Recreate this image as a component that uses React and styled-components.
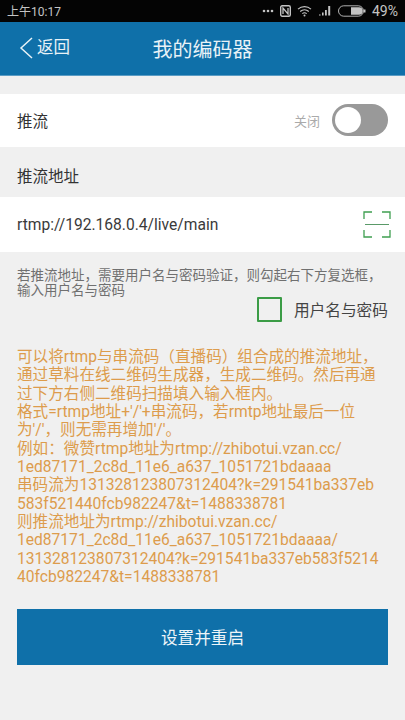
import React from 'react';
import styled, { createGlobalStyle } from 'styled-components';

const Global = createGlobalStyle`
  html, body {
    margin: 0;
    padding: 0;
    background: #f0f0f0;
  }
  * {
    box-sizing: border-box;
  }
`

const Page = styled.div`
  width: 405px;
  height: 720px;
  overflow: hidden;
  display: flex;
  flex-direction: column;
  background: #f0f0f0;
  font-family: Roboto, "Noto Sans CJK SC", sans-serif;
  color: #333;
`

const StatusBar = styled.div`
  height: 22px;
  flex: none;
  padding: 0 7px 1px 7px;
  display: flex;
  align-items: center;
  justify-content: space-between;
  background: #040404;
  color: #c4c4c4;
  font-size: 12px;
`

const StatusIcons = styled.div`
  display: flex;
  align-items: center;
  gap: 6px;
  font-size: 14px;
  svg {
    display: block;
  }
`

const Header = styled.header`
  height: 54px;
  flex: none;
  position: relative;
  display: flex;
  align-items: center;
  justify-content: center;
  background: #0f70a9;
  color: #e8f2f7;
  border-bottom: 1px solid #5a9cc4;
`

const Back = styled.div`
  position: absolute;
  left: 19px;
  top: 12px;
  display: flex;
  align-items: center;
  gap: 4px;
  font-size: 16.5px;
  line-height: 28px;
`

const Title = styled.h1`
  margin: 0 0 1px;
  font-size: 20px;
  font-weight: 400;
`

const Row = styled.div`
  height: ${p => p.$h}px;
  flex: none;
  padding: ${p => p.$pushDown || 0}px 17px ${p => p.$pushUp || 0}px;
  display: flex;
  align-items: center;
  justify-content: space-between;
  background: ${p => (p.$plain ? 'transparent' : '#fff')};
  margin-top: ${p => p.$top || 0}px;
`

const Label = styled.span`
  font-size: 15.5px;
  color: #333;
`

const Address = styled.span`
  font-size: 15.6px;
  color: #3a3a3a;
`

const SwitchGroup = styled.div`
  display: flex;
  align-items: center;
  gap: 12px;
`

const SwitchState = styled.span`
  font-size: 13px;
  color: #aaa;
`

const Track = styled.div`
  width: 56px;
  height: 32px;
  padding: 3px;
  border-radius: 16px;
  background: #999;
`

const Knob = styled.div`
  width: 26px;
  height: 26px;
  border-radius: 50%;
  background: #fff;
`

const ScanIcon = styled.svg`
  display: block;
  margin-right: -3px;
`

const Hint = styled.p`
  margin: 16px 17px 0;
  font-size: 13.5px;
  line-height: 15px;
  color: #707070;
  white-space: pre-line;
`

const CheckRow = styled.div`
  margin: -2px 17px 0 0;
  display: flex;
  align-items: center;
  justify-content: flex-end;
  gap: 12px;
  height: 26px;
`

const CheckBox = styled.div`
  width: 25px;
  height: 25px;
  border: 2px solid #3b9c46;
  border-radius: 1px;
`

const CheckLabel = styled.span`
  font-size: 15.7px;
  color: #444;
`

const Notes = styled.p`
  margin: 26px 17px 0;
  font-size: 15.6px;
  line-height: 18.35px;
  color: #dd9c4c;
  white-space: pre;
`

const SubmitButton = styled.div`
  height: 56px;
  margin: 23px 17px 0;
  flex: none;
  display: flex;
  align-items: center;
  justify-content: center;
  background: #0f70a9;
  color: #eef5f9;
  font-size: 16.6px;
`

const notes = `可以将rtmp与串流码（直播码）组合成的推流地址，
通过草料在线二维码生成器，生成二维码。然后再通
过下方右侧二维码扫描填入输入框内。
格式=rtmp地址+'/'+串流码，若rmtp地址最后一位
为'/'，则无需再增加'/'。
例如：微赞rtmp地址为rtmp://zhibotui.vzan.cc/
1ed87171_2c8d_11e6_a637_1051721bdaaaa
串码流为131328123807312404?k=291541ba337eb
583f521440fcb982247&t=1488338781
则推流地址为rtmp://zhibotui.vzan.cc/
1ed87171_2c8d_11e6_a637_1051721bdaaaa/
131328123807312404?k=291541ba337eb583f5214
40fcb982247&t=1488338781`

const StatusGlyphs = () => (
  <StatusIcons>
    <svg width="12" height="4" viewBox="0 0 12 4">
      <circle cx="2" cy="2" r="1.3" fill="#c4c4c4" />
      <circle cx="6" cy="2" r="1.3" fill="#c4c4c4" />
      <circle cx="10" cy="2" r="1.3" fill="#c4c4c4" />
    </svg>
    <svg width="11" height="12" viewBox="0 0 11 12">
      <rect x="0.7" y="0.7" width="9.6" height="10.6" rx="1.5" fill="none" stroke="#c4c4c4" strokeWidth="1.4" />
      <path d="M3 9V3l5 6V3" fill="none" stroke="#c4c4c4" strokeWidth="1.3" />
    </svg>
    <svg width="15" height="12" viewBox="0 0 15 12">
      <path d="M1 4.2c3.7-3.4 9.3-3.4 13 0M3.2 6.5c2.500-2.200 6.100-2.200 8.600 0M5.300 8.600c1.300-1 3.100-1 4.400 0" fill="none" stroke="#c4c4c4" strokeWidth="1.1" />
      <circle cx="7.5" cy="10.6" r="1" fill="#c4c4c4" />
    </svg>
    <svg width="14" height="11" viewBox="0 0 14 11">
      <path d="M1 9.500h1.600v1H1zM4 7.500h1.600v3H4zM7 5h1.800v5.500H7zM10.200 1h2v9.500h-2z" fill="#c4c4c4" />
    </svg>
    <svg width="28" height="12" viewBox="0 0 28 12">
      <rect x="0.500" y="0.800" width="25" height="10.400" rx="5.200" fill="none" stroke="#c4c4c4" strokeWidth="0.9" />
      <path d="M13 2.200h8a3.800 3.800 0 0 1 0 7.600h-8z" fill="#c4c4c4" />
      <rect x="26" y="4.500" width="1.500" height="3" fill="#c4c4c4" />
    </svg>
    <span>49%</span>
  </StatusIcons>
)

export default function App() {
  return (
    <Page>
      <Global />
      <StatusBar>
        <span>上午10:17</span>
        <StatusGlyphs />
      </StatusBar>
      <Header>
        <Back>
          <svg width="14" height="22" viewBox="0 0 14 22">
            <path d="M13 1 2 11l11 10" fill="none" stroke="#e8f2f7" strokeWidth="1.500" />
          </svg>
          返回
        </Back>
        <Title>我的编码器</Title>
      </Header>
      <Row $h={53} $top={18} $pushUp={1}>
        <Label>推流</Label>
        <SwitchGroup>
          <SwitchState>关闭</SwitchState>
          <Track>
            <Knob />
          </Track>
        </SwitchGroup>
      </Row>
      <Row $h={50} $plain $pushDown={5}>
        <Label>推流地址</Label>
      </Row>
      <Row $h={55}>
        <Address>rtmp://192.168.0.4/live/main</Address>
        <ScanIcon width="28" height="27" viewBox="0 0 28 27">
          <path d="M1 8V1h8M19 1h8v7M1 19v7h8M19 26h8v-7" fill="none" stroke="#3f9f50" strokeWidth="1.300" />
          <path d="M2 13.500h24" fill="none" stroke="#5a9a68" strokeWidth="1" />
        </ScanIcon>
      </Row>
      <Hint>{'若推流地址，需要用户名与密码验证，则勾起右下方复选框，\n输入用户名与密码'}</Hint>
      <CheckRow>
        <CheckBox />
        <CheckLabel>用户名与密码</CheckLabel>
      </CheckRow>
      <Notes>{notes}</Notes>
      <SubmitButton>设置并重启</SubmitButton>
    </Page>
  )
}
